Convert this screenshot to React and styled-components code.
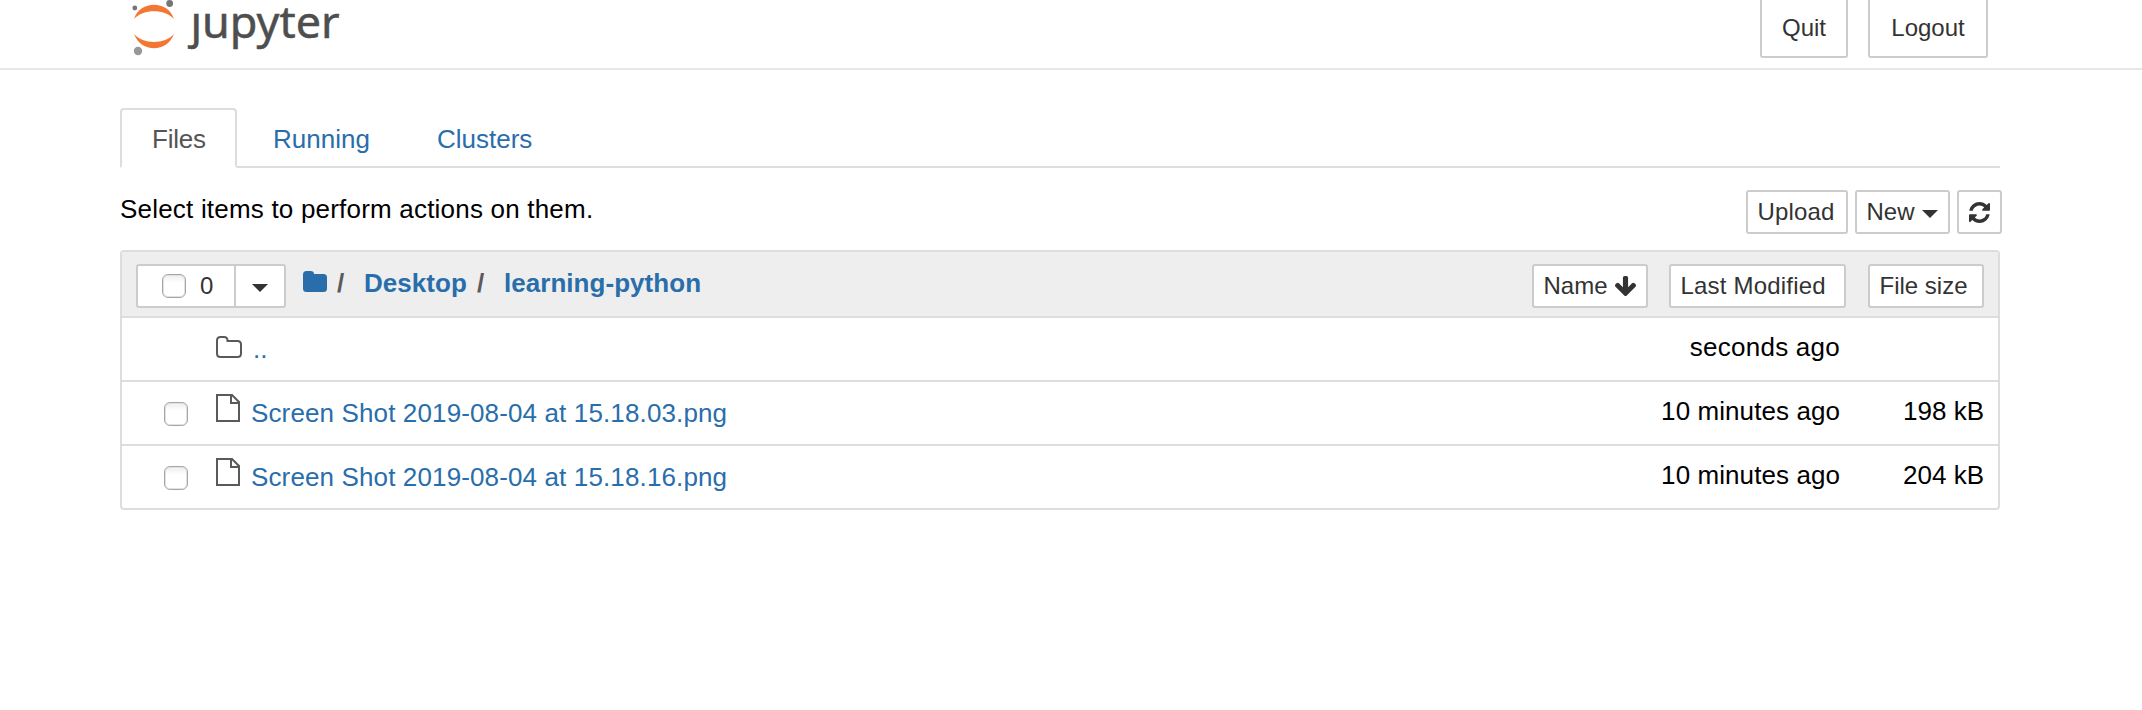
import React from "react";
import styled, { createGlobalStyle } from "styled-components";

const GlobalStyle = createGlobalStyle`
  * { box-sizing: border-box; }
  body {
    margin: 0;
    background: #fff;
    color: #000;
    font: 26px/36px "Liberation Sans", Arial, sans-serif;
    overflow: hidden;
  }
  svg { display: block; flex: none; }
`;

const Header = styled.header`
  display: flex;
  justify-content: space-between;
  height: 70px;
  padding: 0 154px 0 130px;
  border-bottom: 2px solid #e7e7e7;
`;
const Logo = styled.svg`
  width: 220px;
  height: 64px;
  overflow: visible;
  font-family: "Noto Sans", "Open Sans", sans-serif;
`;
const HeaderActions = styled.div`
  display: flex;
  gap: 20px;
`;
const HeaderButton = styled.button`
  width: ${(p) => p.$width}px;
  height: 58px;
  padding: 0;
  border: 2px solid #ccc;
  border-top: 0;
  border-radius: 0 0 3px 3px;
  background: #fff;
  color: #333;
  font: 24px/56px "Liberation Sans", Arial, sans-serif;
`;

const Main = styled.main`
  width: 1882px;
  margin: 38px 0 0 120px;
`;
const Tabs = styled.nav`
  display: flex;
  width: 1880px;
  height: 60px;
  border-bottom: 2px solid #ddd;
`;
const Tab = styled.a`
  width: ${(p) => p.$width}px;
  height: 60px;
  margin-right: 4px;
  padding: 11px 0 0 30px;
  border: 2px solid ${(p) => (p.$active ? "#ddd" : "transparent")};
  border-bottom-color: ${(p) => (p.$active ? "#fff" : "transparent")};
  border-radius: 4px 4px 0 0;
  color: ${(p) => (p.$active ? "#555" : "#296eaa")};
  letter-spacing: ${(p) => (p.$active ? -0.2 : 0)}px;
`;
const Toolbar = styled.div`
  display: flex;
  justify-content: space-between;
  height: 82px;
  padding-top: 22px;
`;
const Hint = styled.p`
  margin: 1px 0 0;
  height: 36px;
  letter-spacing: 0.2px;
`;
const ToolButtons = styled.div`
  display: flex;
  gap: 7px;
`;
const Button = styled.button`
  display: flex;
  align-items: center;
  width: ${(p) => p.$width}px;
  height: 44px;
  padding: 0 9.5px;
  border: 2px solid #ccc;
  border-radius: 3px;
  background: #fff;
  color: #333;
  font: 24px/40px "Liberation Sans", Arial, sans-serif;
  letter-spacing: ${(p) => p.$spacing || 0}px;
  white-space: nowrap;
  gap: ${(p) => p.$gap || 0}px;
`;
const Caret = styled.span`
  border: 8px solid transparent;
  border-top-color: #333;
  border-bottom: 0;
  margin-top: 4px;
`;

const Panel = styled.section`
  width: 1880px;
  border: 2px solid #ddd;
  border-radius: 4px;
`;
const ListHeader = styled.div`
  display: flex;
  height: 64px;
  padding: 12px 14px 0;
  background: #eee;
`;
const Selector = styled.div`
  display: flex;
  width: 150px;
  height: 44px;
  border: 2px solid #ccc;
  border-radius: 3px;
  background: #fff;
  color: #333;
  font-size: 24px;
  line-height: 40px;
`;
const SelectCount = styled.div`
  display: flex;
  align-items: center;
  gap: 14px;
  width: 98px;
  padding-left: 24px;
  border-right: 2px solid #ccc;
`;
const SelectMenu = styled.div`
  display: flex;
  flex: 1;
  align-items: center;
  justify-content: center;
`;
const Checkbox = styled.input.attrs({ type: "checkbox" })`
  appearance: none;
  flex: none;
  width: 24px;
  height: 24px;
  margin: 0;
  border: 1px solid #a6a6a6;
  border-radius: 6px;
  background: linear-gradient(#ededed, #fff 35%);
  box-shadow: inset 0 0 0 1px #e2e2e2;
`;
const Breadcrumbs = styled.div`
  display: flex;
  flex: 1;
  padding: 1px 0 0 17px;
  color: #5a5a5a;
  font-weight: bold;
`;
const CrumbFolder = styled.svg`
  margin-top: 6px;
  width: 24px;
  height: 21px;
  fill: #296eaa;
`;
const Slash = styled.span`
  width: 27px;
  margin-left: 10px;
`;
const Crumb = styled.a`
  color: #296eaa;
  letter-spacing: 0.05px;
`;
const SortButtons = styled.div`
  display: flex;
  gap: 22px;

  & > :first-child { margin-right: -1px; }
`;

const Row = styled.div`
  display: flex;
  height: 64px;
  border-top: 2px solid #ddd;
`;
const CheckCell = styled.div`
  width: 94px;
  padding: 20px 0 0 42px;
  line-height: 0;
`;
const ItemIcon = styled.svg`
  width: 26px;
  height: 28px;
  margin-top: ${(p) => (p.$folder ? 16 : 12)}px;
  fill: none;
  stroke: #5a5a5a;
  stroke-width: 2;
`;
const ItemName = styled.a`
  flex: 1;
  margin-left: ${(p) => (p.$folder ? 11 : 9)}px;
  padding-top: 13px;
  color: #296eaa;
  letter-spacing: 0.13px;
`;
const Modified = styled.span`
  padding-top: 11px;
  letter-spacing: ${(p) => p.$spacing}px;
`;
const Size = styled.span`
  width: 158px;
  padding: 11px 14px 0 0;
  text-align: right;
`;

const RefreshIcon = () => (
  <svg width="21" height="21" viewBox="0 0 1536 1536" fill="#333">
    <path d="M1511 928q0 5-1 7-64 268-268 434.500t-478 166.500q-146 0-282.500-55t-243.500-157l-129 129q-19 19-45 19t-45-19-19-45v-448q0-26 19-45t45-19h448q26 0 45 19t19 45-19 45l-137 137q71 66 161 102t187 36q134 0 250-65t186-179q11-17 53-117 8-23 30-23h192q13 0 22.500 9.500t9.500 22.500zm25-800v448q0 26-19 45t-45 19h-448q-26 0-45-19t-19-45 19-45l138-138q-148-137-349-137-134 0-250 65t-186 179q-11 17-53 117-8 23-30 23h-199q-13 0-22.500-9.500t-9.500-22.500v-7q65-268 270-434.500t480-166.500q146 0 284 55.500t245 156.500l130-129q19-19 45-19t45 19 19 45z" />
  </svg>
);

const ArrowDownIcon = () => (
  <svg width="21" height="20" viewBox="117 128 1558 1483" fill="#333">
    <path d="M1675 832q0 53-37 90l-651 652q-39 37-91 37-53 0-90-37l-651-652q-38-36-38-90 0-53 38-91l74-75q39-37 91-37 53 0 90 37l294 294v-704q0-52 38-90t90-38h128q52 0 90 38t38 90v704l294-294q37-37 90-37 52 0 91 37l75 75q37 39 37 91z" />
  </svg>
);

const FolderIcon = () => (
  <ItemIcon $folder viewBox="0 0 26 28">
    <path d="M1 10V6.500Q1 3 4.500 3H8Q11.500 3 11.500 6.500V7H21.500Q25 7 25 10.500V19.500Q25 23 21.500 23H4.500Q1 23 1 19.500Z" />
  </ItemIcon>
);

const FileIcon = () => (
  <ItemIcon viewBox="0 0 26 28">
    <path d="M1 1H16L23 8V27H1ZM15 1V9H23" />
  </ItemIcon>
);

const files = [
  { name: "..", modified: "seconds ago", size: "", folder: true },
  { name: "Screen Shot 2019-08-04 at 15.18.03.png", modified: "10 minutes ago", size: "198 kB" },
  { name: "Screen Shot 2019-08-04 at 15.18.16.png", modified: "10 minutes ago", size: "204 kB" },
];

export default function App() {
  return (
    <>
      <GlobalStyle />
      <Header>
        <Logo viewBox="0 0 220 64" role="img" aria-label="jupyter">
          <path d="M4 19C10 0 38 0 44 19C35 8.500 13 8.500 4 19ZM4 34C13 44.500 35 44.500 44 34C37 53 11 53 4 34Z" fill="#f37733" />
          <circle cx="4.800" cy="8" r="2.400" fill="#767677" />
          <circle cx="39.700" cy="3.500" r="3.400" fill="#767677" />
          <circle cx="8" cy="51" r="4.200" fill="#989898" />
          <text x="60.500" y="38" fontSize="44" fill="#4e4e4e" stroke="#4e4e4e" strokeWidth="0.500" textLength="149" lengthAdjust="spacingAndGlyphs">ȷupyter</text>
        </Logo>
        <HeaderActions>
          <HeaderButton $width={88}>Quit</HeaderButton>
          <HeaderButton $width={120}>Logout</HeaderButton>
        </HeaderActions>
      </Header>
      <Main>
        <Tabs>
          <Tab $active $width={117}>Files</Tab>
          <Tab $width={160}>Running</Tab>
          <Tab $width={160}>Clusters</Tab>
        </Tabs>
        <Toolbar>
          <Hint>Select items to perform actions on them.</Hint>
          <ToolButtons>
            <Button $width={102} $spacing={0.15}>Upload</Button>
            <Button $width={95} $gap={7}>New <Caret /></Button>
            <Button $width={45} aria-label="Refresh"><RefreshIcon /></Button>
          </ToolButtons>
        </Toolbar>
        <Panel>
          <ListHeader>
            <Selector>
              <SelectCount><Checkbox />0</SelectCount>
              <SelectMenu><Caret /></SelectMenu>
            </Selector>
            <Breadcrumbs>
              <CrumbFolder viewBox="0 0 24 21">
                <path d="M0 3.500Q0 0 3.500 0H7.500Q11 0 11 3H20.500Q24 3 24 6.500V17.500Q24 21 20.500 21H3.500Q0 21 0 17.500Z" />
              </CrumbFolder>
              <Slash>/</Slash>
              <Crumb>Desktop</Crumb>
              <Slash>/</Slash>
              <Crumb>learning-python</Crumb>
            </Breadcrumbs>
            <SortButtons>
              <Button $width={116} $gap={7}>Name <ArrowDownIcon /></Button>
              <Button $width={177} $spacing={0.2}>Last Modified</Button>
              <Button $width={116}>File size</Button>
            </SortButtons>
          </ListHeader>
          {files.map((f) => (
            <Row key={f.name}>
              <CheckCell>{!f.folder && <Checkbox />}</CheckCell>
              {f.folder ? <FolderIcon /> : <FileIcon />}
              <ItemName $folder={f.folder}>{f.name}</ItemName>
              <Modified $spacing={f.folder ? 0.25 : 0.08}>{f.modified}</Modified>
              <Size>{f.size}</Size>
            </Row>
          ))}
        </Panel>
      </Main>
    </>
  );
}
